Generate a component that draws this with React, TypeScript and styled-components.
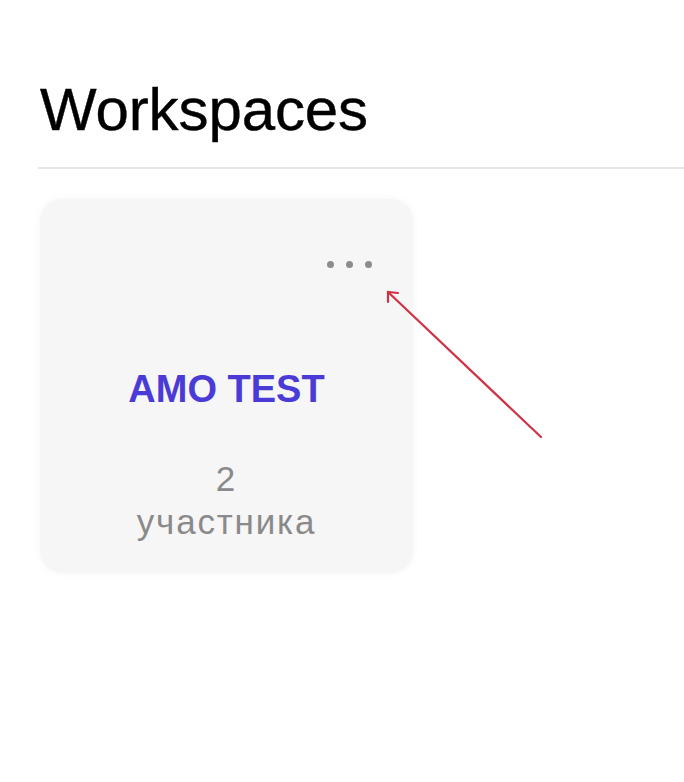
import React from 'react';
import styled, { createGlobalStyle } from 'styled-components';

const GlobalStyle = createGlobalStyle`
    html, body {
        margin: 0;
        padding: 0;
        background: #ffffff;
    }
    body {
        font-family: "Liberation Sans", Arial, sans-serif;
        color: #000000;
    }
`;

const Page = styled.div`
    position: relative;
    width: 684px;
    height: 782px;
    padding-top: 74px;
    box-sizing: border-box;
    overflow: hidden;
`;

const Header = styled.header`
    margin-left: 38px;
    padding-left: 2px;
    padding-bottom: 21px;
    border-bottom: 2px solid #e6e6e6;
`;

const Title = styled.h1`
    margin: 0;
    font-size: 60px;
    line-height: 72px;
    font-weight: 400;
    letter-spacing: -0.1px;
    color: #000000;
    -webkit-text-stroke: 0.4px #000000;
`;

const Grid = styled.div`
    display: flex;
    padding: 30px 0 0 40px;
`;

const Card = styled.div`
    width: 373px;
    height: 374px;
    box-sizing: border-box;
    padding: 62px 41px 0;
    border-radius: 22px;
    background: #f6f6f6;
    box-shadow: 0 0 8px rgba(0, 0, 0, 0.04);
    display: flex;
    flex-direction: column;
    align-items: stretch;
`;

const MenuRow = styled.div`
    display: flex;
    justify-content: flex-end;
    gap: 12px;
`;

const Dot = styled.span`
    width: 7px;
    height: 7px;
    border-radius: 50%;
    background: #8c8c8c;
`;

const CardName = styled.div`
    margin-top: 98px;
    text-align: center;
    font-size: 38px;
    line-height: 46px;
    font-weight: 700;
    color: #4b3bd6;
`;

const Members = styled.div`
    margin-top: 45px;
    text-align: center;
    font-size: 35px;
    line-height: 43px;
    letter-spacing: 1.8px;
    color: #8a8a8a;
`;

const Arrow = styled.svg`
    position: absolute;
    left: 0;
    top: 0;
    pointer-events: none;
`;

const App: React.FC = () => {
    return (
        <Page>
            <GlobalStyle />
            <Header>
                <Title>Workspaces</Title>
            </Header>
            <Grid>
                <Card>
                    <MenuRow>
                        <Dot />
                        <Dot />
                        <Dot />
                    </MenuRow>
                    <CardName>AMO TEST</CardName>
                    <Members>
                        <div>2</div>
                        <div>участника</div>
                    </Members>
                </Card>
            </Grid>
            {/* annotation arrow over the screenshot */}
            <Arrow width="684" height="782" viewBox="0 0 684 782">
                <g stroke="#cf3346" strokeWidth="2.2" fill="none" strokeLinecap="round">
                    <line x1="541" y1="437" x2="388" y2="292" />
                    <polyline points="398,293 388,292 388,302" />
                </g>
            </Arrow>
        </Page>
    );
};

export default App;
